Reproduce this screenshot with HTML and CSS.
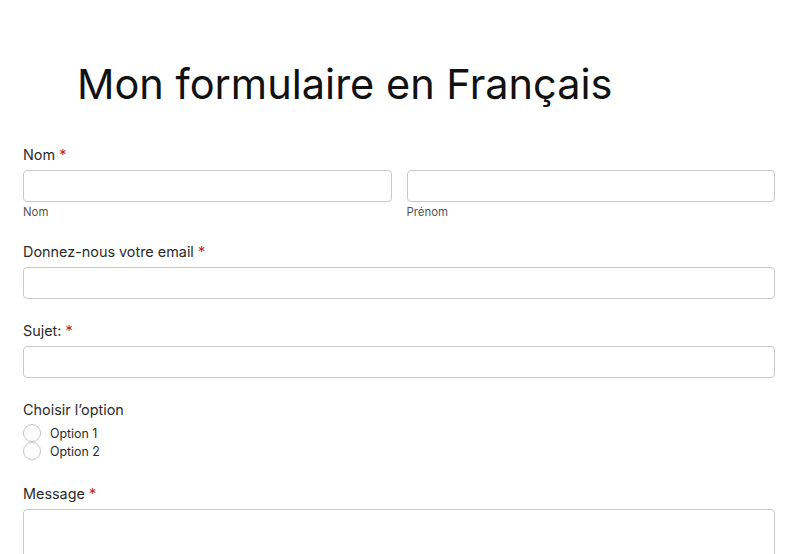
FILE: index.html
```html
<!DOCTYPE html>
<html lang="fr">
<head>
<meta charset="utf-8">
<title>Mon formulaire en Français</title>
<link rel="stylesheet" href="styles.css">
</head>
<body>
<div class="page">
  <h1 class="title">Mon formulaire en Français</h1>
  <form class="form">
    <div class="group">
      <label class="label">Nom <span class="req">*</span></label>
      <div class="name-row">
        <div class="name-col">
          <input class="input" type="text">
          <span class="sublabel">Nom</span>
        </div>
        <div class="name-col">
          <input class="input" type="text">
          <span class="sublabel">Prénom</span>
        </div>
      </div>
    </div>
    <div class="group">
      <label class="label">Donnez-nous votre email <span class="req">*</span></label>
      <input class="input" type="email">
    </div>
    <div class="group">
      <label class="label">Sujet: <span class="req">*</span></label>
      <input class="input" type="text">
    </div>
    <div class="group group-radio">
      <label class="label label-radio">Choisir l’option</label>
      <label class="radio-row"><span class="radio"></span><span class="radio-text">Option 1</span></label>
      <label class="radio-row"><span class="radio"></span><span class="radio-text">Option 2</span></label>
    </div>
    <div class="group">
      <label class="label">Message <span class="req">*</span></label>
      <textarea class="textarea"></textarea>
    </div>
  </form>
</div>
</body>
</html>
```

FILE: styles.css
```css
* { box-sizing: border-box; }
html, body { margin: 0; padding: 0; background: #fff; }
body {
  font-family: Inter, "Liberation Sans", Arial, sans-serif;
  color: #2b2b2b;
}
.page {
  padding: 0 25px 0 23px;
}
.title {
  font-family: Inter, "Liberation Sans", sans-serif;
  font-weight: 400;
  font-size: 41.5px;
  line-height: 52px;
  color: #111;
  margin: 0;
  padding: 58px 0 34px 54px;
}
.form { display: flex; flex-direction: column; }
.group { display: flex; flex-direction: column; margin-bottom: 21px; }
.group-radio { margin-bottom: 23px; }
.label {
  font-size: 14.4px;
  line-height: 20px;
  padding-top: 1px;
  margin-bottom: 5px;
  color: #2b2b2b;
}
.label-radio { margin-bottom: 4px; }
.req { color: #c0282d; }
.name-row { display: flex; gap: 15px; }
.name-col { flex: 1; display: flex; flex-direction: column; }
.input {
  height: 32px;
  border: 1px solid #c9c9c9;
  border-radius: 4px;
  background: #fff;
  width: 100%;
  margin: 0;
}
.sublabel {
  font-size: 11.4px;
  line-height: 16px;
  margin-top: 2px;
  color: #555;
}
.radio-row {
  display: flex;
  align-items: center;
  gap: 9px;
  height: 18px;
}
.radio {
  width: 18px;
  height: 18px;
  border: 1px solid #c4c4c4;
  border-radius: 50%;
  background: #fff;
  flex: none;
}
.radio-text { font-size: 12.4px; color: #2b2b2b; }
.textarea {
  height: 120px;
  border: 1px solid #c9c9c9;
  border-radius: 4px;
  width: 100%;
  margin: 0;
  resize: none;
}
```
